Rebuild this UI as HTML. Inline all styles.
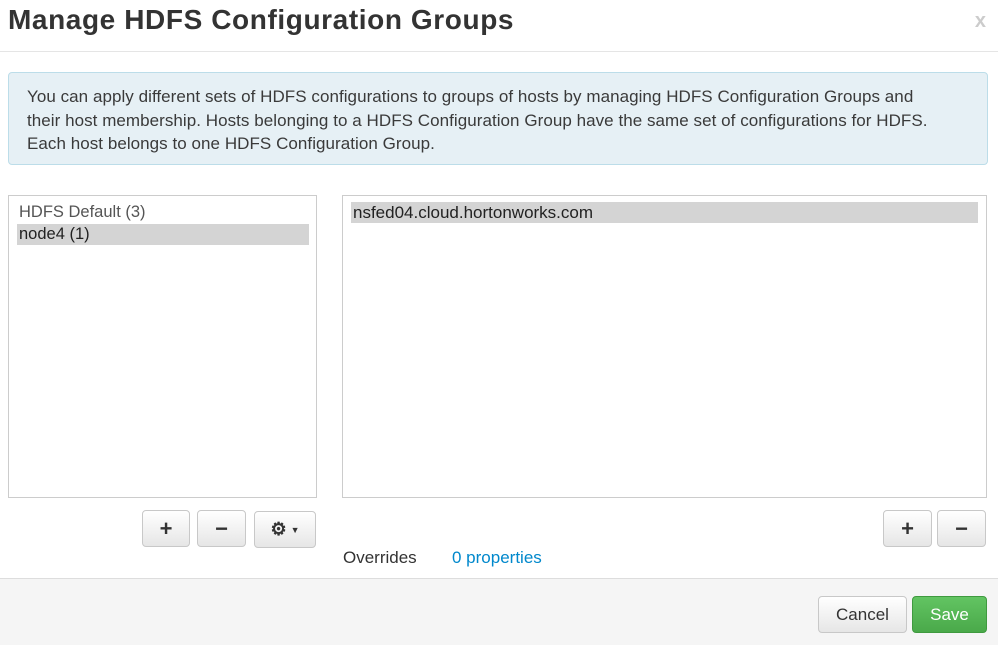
<!DOCTYPE html>
<html><head><style>
body{margin:0;width:998px;height:644px;background:#fff;font-family:"Liberation Sans",sans-serif;position:relative;overflow:hidden;color:#333}
.a{position:absolute}
h1{position:absolute;left:8px;top:4px;margin:0;font-size:28px;font-weight:bold;color:#333;letter-spacing:0.6px}
.btn{position:absolute;border:1px solid #c8c8c8;border-radius:4px;background:linear-gradient(#fff,#e6e6e6);box-sizing:border-box;display:flex;align-items:center;justify-content:center;font-weight:bold;font-size:22px;color:#333}
.list{position:absolute;border:1px solid #ccc;box-sizing:border-box;font-size:16.5px}
.it{position:absolute;left:8px;height:21px;line-height:21px;padding-left:2px}
</style></head><body>
<h1>Manage HDFS Configuration Groups</h1>
<div class="a" style="right:12px;top:10px;font-size:20px;font-weight:bold;color:#ccc">x</div>
<div class="a" style="left:0;top:51px;width:998px;height:1px;background:#e5e5e5"></div>
<div class="a" style="left:8px;top:72px;width:980px;height:93px;box-sizing:border-box;background:#e6f0f5;border:1px solid #bcdde9;border-radius:4px;padding:12px 18px;font-size:17px;letter-spacing:0.05px;line-height:23.5px;color:#3a3a3a;white-space:nowrap">You can apply different sets of HDFS configurations to groups of hosts by managing HDFS Configuration Groups and<br>their host membership. Hosts belonging to a HDFS Configuration Group have the same set of configurations for HDFS.<br>Each host belongs to one HDFS Configuration Group.</div>
<div class="list" style="left:8px;top:195px;width:309px;height:303px">
<div class="it" style="top:6px;width:290px;color:#555">HDFS Default (3)</div>
<div class="it" style="top:28px;width:290px;background:#d4d4d4;color:#222">node4 (1)</div>
</div>
<div class="list" style="left:342px;top:195px;width:645px;height:303px;font-size:17px">
<div class="it" style="top:6px;width:625px;background:#d4d4d4;color:#222">nsfed04.cloud.hortonworks.com</div>
</div>
<div class="btn" style="left:142px;top:510px;width:48px;height:37px">+</div>
<div class="btn" style="left:197px;top:510px;width:49px;height:37px">−</div>
<div class="btn" style="left:254px;top:511px;width:62px;height:37px;font-size:18px">⚙<span style="font-size:9px;margin-left:4px">▼</span></div>
<div class="btn" style="left:883px;top:510px;width:49px;height:37px">+</div>
<div class="btn" style="left:937px;top:510px;width:49px;height:37px">−</div>
<div class="a" style="left:343px;top:548px;font-size:17px">Overrides</div>
<div class="a" style="left:452px;top:548px;font-size:17px;color:#0088cc">0 properties</div>
<div class="a" style="left:0;top:578px;width:998px;height:66px;background:#f5f5f5;border-top:1px solid #ddd"></div>
<div class="btn" style="left:818px;top:596px;width:89px;height:37px;font-weight:normal;font-size:17px">Cancel</div>
<div class="btn" style="left:912px;top:596px;width:75px;height:37px;font-weight:normal;font-size:17px;color:#fff;background:linear-gradient(#62c462,#4aa94a);border-color:#3f9a3f">Save</div>
</body></html>
